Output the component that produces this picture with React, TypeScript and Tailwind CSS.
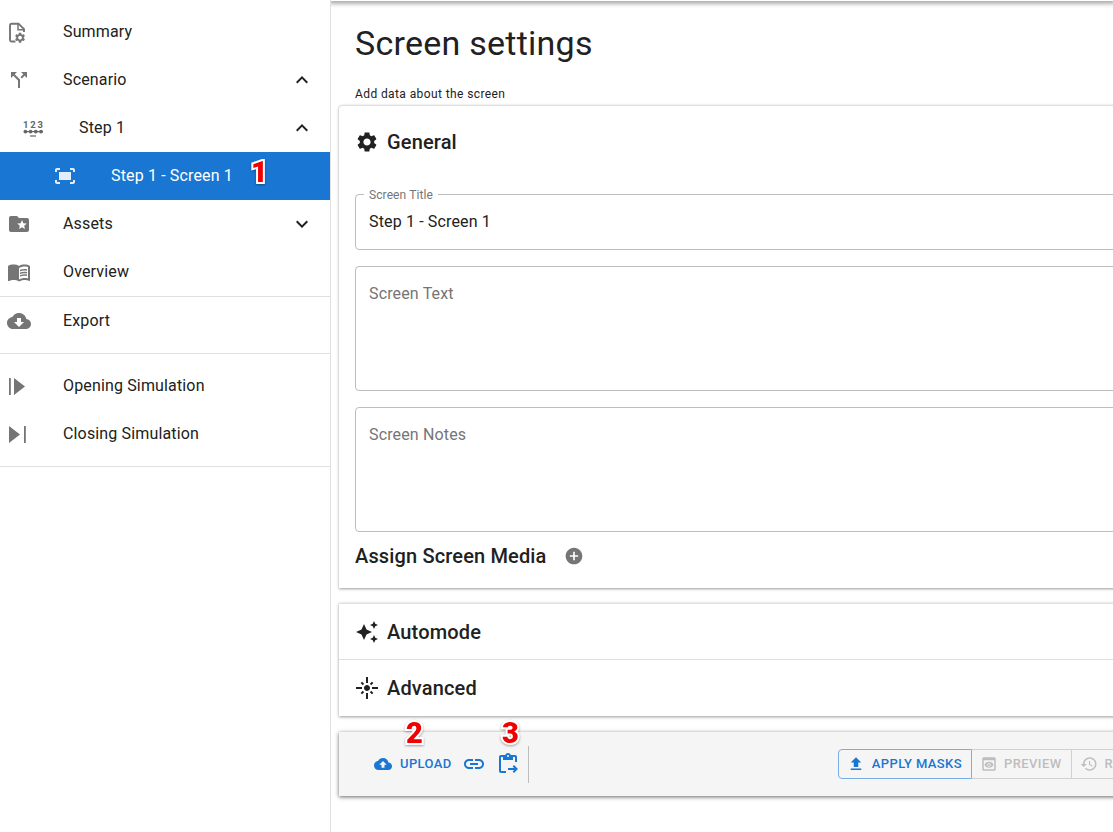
import type { ReactNode } from 'react';

function Icon({ d, size = 24, className = '' }: { d: string; size?: number; className?: string }) {
  return (
    <svg viewBox="0 0 24 24" width={size} height={size} fill="currentColor" className={`shrink-0 ${className}`}>
      <path d={d} />
    </svg>
  );
}

const paths = {
  gear: 'M19.14 12.94c.04-.3.06-.61.06-.94 0-.32-.02-.64-.07-.94l2.03-1.58c.18-.14.23-.41.12-.61l-1.92-3.32c-.12-.22-.37-.29-.59-.22l-2.39.96c-.5-.38-1.03-.7-1.62-.94l-.36-2.54c-.04-.24-.24-.41-.48-.41h-3.84c-.24 0-.43.17-.47.41l-.36 2.54c-.59.24-1.13.57-1.62.94l-2.39-.96c-.22-.08-.47 0-.59.22L2.74 8.87c-.12.21-.08.47.12.61l2.03 1.58c-.05.3-.09.63-.09.94s.02.64.07.94l-2.03 1.58c-.18.14-.23.41-.12.61l1.92 3.32c.12.22.37.29.59.22l2.39-.96c.5.38 1.03.7 1.62.94l.36 2.54c.05.24.24.41.48.41h3.84c.24 0 .44-.17.47-.41l.36-2.54c.59-.24 1.13-.56 1.62-.94l2.39.96c.22.08.47 0 .59-.22l1.92-3.32c.12-.22.07-.47-.12-.61l-2.01-1.58zM12 15.6c-1.98 0-3.6-1.62-3.6-3.6s1.62-3.6 3.6-3.6 3.6 1.62 3.6 3.6-1.62 3.6-3.6 3.6z',
  less: 'M12 8l-6 6 1.41 1.41L12 10.83l4.59 4.58L18 14z',
  more: 'M16.59 8.59 12 13.17 7.41 8.59 6 10l6 6 6-6z',
  split: 'M14 4l2.29 2.29-2.88 2.88 1.42 1.42 2.88-2.88L20 10V4zm-4 0H4v6l2.29-2.29 4.71 4.7V20h2v-8.41l-5.29-5.3z',
  fit: 'M17 4h3c1.1 0 2 .9 2 2v2h-2V6h-3V4zM4 8V6h3V4H4c-1.1 0-2 .9-2 2v2h2zm16 8v2h-3v2h3c1.1 0 2-.9 2-2v-2h-2zM7 18H4v-2H2v2c0 1.1.9 2 2 2h3v-2zM18 8H6v8h12V8z',
  folder: 'M20 6h-8l-2-2H4c-1.1 0-2 .9-2 2v12c0 1.1.9 2 2 2h16c1.1 0 2-.9 2-2V8c0-1.1-.9-2-2-2zm-2.06 11L15 15.28 12.06 17l.78-3.33-2.59-2.24 3.41-.29L15 8l1.34 3.14 3.41.29-2.59 2.24.78 3.33z',
  book: 'M21 5c-1.11-.35-2.33-.5-3.5-.5-1.95 0-4.05.4-5.5 1.5-1.45-1.1-3.55-1.5-5.5-1.5S2.45 4.9 1 6v14.65c0 .25.25.5.5.5.1 0 .15-.05.25-.05C3.1 20.45 5.05 20 6.5 20c1.95 0 4.05.4 5.5 1.5 1.35-.85 3.8-1.5 5.5-1.5 1.65 0 3.35.3 4.75 1.05.1.05.15.05.25.05.25 0 .5-.25.5-.5V6c-.6-.45-1.25-.75-2-1zm0 13.5c-1.1-.35-2.3-.5-3.5-.5-1.7 0-4.15.65-5.5 1.5V8c1.35-.85 3.8-1.5 5.5-1.5 1.2 0 2.4.15 3.5.5v11.5zM17.5 10.5c.88 0 1.73.09 2.5.26V9.24c-.79-.15-1.64-.24-2.5-.24-1.7 0-3.24.29-4.5.83v1.66c1.13-.64 2.7-.99 4.5-.99zM13 12.49v1.66c1.13-.64 2.7-.99 4.5-.99.88 0 1.73.09 2.5.26V11.9c-.79-.15-1.64-.24-2.5-.24-1.7 0-3.24.3-4.5.83zM17.5 14.33c-1.7 0-3.24.29-4.5.83v1.66c1.13-.64 2.7-.99 4.5-.99.88 0 1.73.09 2.5.26v-1.52c-.79-.16-1.64-.24-2.5-.24z',
  cloudDown: 'M19.35 10.04C18.67 6.59 15.64 4 12 4 9.11 4 6.6 5.64 5.35 8.04 2.34 8.36 0 10.91 0 14c0 3.31 2.69 6 6 6h13c2.76 0 5-2.24 5-5 0-2.64-2.05-4.78-4.65-4.96zM17 13l-5 5-5-5h3V9h4v4h3z',
  cloudUp: 'M19.35 10.04C18.67 6.59 15.64 4 12 4 9.11 4 6.6 5.64 5.35 8.04 2.34 8.36 0 10.91 0 14c0 3.31 2.69 6 6 6h13c2.76 0 5-2.24 5-5 0-2.64-2.05-4.78-4.65-4.96zM14 13v4h-4v-4H7l5-5 5 5h-3z',
  opening: 'M2 4h1.8v17H2zM7 4l11 8.5L7 21z',
  closing: 'M2 4l11 8.5L2 21zM17 4h1.8v17H17z',
  add: 'M12 2C6.48 2 2 6.48 2 12s4.48 10 10 10 10-4.48 10-10S17.52 2 12 2zm5 11h-4v4h-2v-4H7v-2h4V7h2v4h4v2z',
  auto: 'm19 9 1.25-2.75L23 5l-2.75-1.25L19 1l-1.25 2.75L15 5l2.75 1.25zm-7.5.5L9 4 6.5 9.5 1 12l5.5 2.5L9 20l2.5-5.5L17 12zM19 15l-1.25 2.75L15 19l2.75 1.25L19 23l1.25-2.75L23 19l-2.75-1.25z',
  flare: 'M7 11H1v2h6v-2zm2.17-3.24L7.05 5.64 5.64 7.05l2.12 2.12 1.41-1.41zM13 1h-2v6h2V1zm5.36 6.05-1.41-1.41-2.12 2.12 1.41 1.41 2.12-2.12zM17 11v2h6v-2h-6zm-5-2c-1.66 0-3 1.34-3 3s1.34 3 3 3 3-1.34 3-3-1.34-3-3-3zm2.83 7.24 2.12 2.12 1.41-1.41-2.12-2.12-1.41 1.41zm-9.19.71 1.41 1.41 2.12-2.12-1.41-1.41-2.12 2.12zM11 23h2v-6h-2v6z',
  link: 'M3.9 12c0-1.71 1.39-3.1 3.1-3.1h4V7H7c-2.76 0-5 2.24-5 5s2.24 5 5 5h4v-1.9H7c-1.71 0-3.1-1.39-3.1-3.1zM8 13h8v-2H8v2zm9-6h-4v1.9h4c1.71 0 3.1 1.39 3.1 3.1s-1.39 3.1-3.1 3.1h-4V17h4c2.76 0 5-2.24 5-5s-2.24-5-5-5z',
  paste: 'M5 5h2v3h10V5h2v5h2V5c0-1.1-.9-2-2-2h-4.18C14.4 1.84 13.3 1 12 1s-2.4.84-2.82 2H5c-1.1 0-2 .9-2 2v14c0 1.1.9 2 2 2h5v-2H5V5zm7-2c.55 0 1 .45 1 1s-.45 1-1 1-1-.45-1-1 .45-1 1-1zM18.01 13l-1.42 1.41 1.58 1.58H12v2h6.17l-1.58 1.59 1.42 1.41 3.99-4z',
  publish: 'M5 20h14v-2H5v2zm0-10h4v6h6v-6h4l-7-7-7 7z',
  preview: 'M19 3H5c-1.11 0-2 .9-2 2v14c0 1.1.89 2 2 2h14c1.1 0 2-.9 2-2V5c0-1.1-.89-2-2-2zm0 16H5V7h14v12zm-5.5-6c0 .83-.67 1.5-1.5 1.5s-1.5-.67-1.5-1.5.67-1.5 1.5-1.5 1.5.67 1.5 1.5zM12 9c-2.73 0-5.06 1.66-6 4 .94 2.34 3.27 4 6 4s5.06-1.66 6-4c-.94-2.34-3.27-4-6-4zm0 6.5c-1.38 0-2.5-1.12-2.5-2.5s1.12-2.5 2.5-2.5 2.5 1.12 2.5 2.5-1.12 2.5-2.5 2.5z',
  history: 'M13 3c-4.97 0-9 4.03-9 9H1l3.89 3.89.07.14L9 12H6c0-3.87 3.13-7 7-7s7 3.13 7 7-3.13 7-7 7c-1.93 0-3.68-.79-4.94-2.06l-1.42 1.42C8.27 19.99 10.51 21 13 21c4.97 0 9-4.03 9-9s-4.03-9-9-9zm-1 5v5l4.28 2.54.72-1.21-3.5-2.08V8H12z',
};

function FileGearIcon() {
  return (
    <svg viewBox="0 0 24 24" width={24} height={24} fill="none" className="shrink-0">
      <path d="M8.5 21.5H4.5A1.5 1.5 0 0 1 3 20V5.2A1.5 1.5 0 0 1 4.5 3.7H11.5L17 9.2V12" stroke="currentColor" strokeWidth="1.9" />
      <path d="M11 4V9.8H16.6" stroke="currentColor" strokeWidth="1.5" />
      <g transform="translate(6.8 11.4) scale(.52)">
        <path d={paths.gear} fill="currentColor" />
      </g>
    </svg>
  );
}

function StepsIcon() {
  return (
    <svg viewBox="0 0 24 24" width={24} height={24} className="shrink-0" fill="currentColor">
      <text x="12" y="11.5" textAnchor="middle" fontSize="9.5" fontWeight="700" fontFamily="Roboto, sans-serif" letterSpacing="1.8">123</text>
      <rect x="2" y="15" width="19" height="1.2" />
      <circle cx="3.4" cy="15.6" r="1.9" />
      <circle cx="8.6" cy="15.6" r="1.9" />
      <circle cx="13.8" cy="15.6" r="1.9" />
      <circle cx="19" cy="15.6" r="1.9" />
      <rect x="8" y="19.4" width="6" height="1.2" />
    </svg>
  );
}

function Marker({ value, className }: { value: string; className: string }) {
  return (
    <span
      className={`absolute font-['Roboto',sans-serif] text-[29px] leading-none font-black text-[#f00000] [-webkit-text-stroke:4px_white] [paint-order:stroke_fill] drop-shadow-[0_1px_1px_rgba(0,0,0,0.35)] ${className}`}
    >
      {value}
    </span>
  );
}

function NavRow({ icon, label, chevron }: { icon: ReactNode; label: string; chevron?: 'up' | 'down' }) {
  return (
    <div className="relative flex h-12 items-center">
      <span className="absolute left-[7px] flex text-[#757575]">{icon}</span>
      <span className="ml-[63px] text-base tracking-[0.15px]">{label}</span>
      {chevron && <Icon d={chevron === 'up' ? paths.less : paths.more} className="absolute right-[16px] text-[#212121]" />}
    </div>
  );
}

function Field({ label, placeholder, value, tall }: { label?: string; placeholder?: string; value?: string; tall?: boolean }) {
  return (
    <div className={`relative rounded border border-[#bdbdbd] px-[13px] ${tall ? 'h-[125px] pt-[15px]' : 'flex h-[56px] items-center'}`}>
      {label && <span className="absolute -top-2 left-[8px] bg-white px-[5px] text-xs leading-4 tracking-[0.1px] text-[#757575]">{label}</span>}
      {value && <span className="text-base tracking-[0.15px] text-[#212121]">{value}</span>}
      {placeholder && <span className="text-base tracking-[0.15px] text-[#757575]">{placeholder}</span>}
    </div>
  );
}

function SectionHead({ icon, title }: { icon: string; title: string }) {
  return (
    <div className="flex h-full items-center pl-[16px]">
      <Icon d={icon} className="text-[#212121]" />
      <span className="ml-2 text-xl font-medium tracking-[0.15px] text-[#212121]">{title}</span>
    </div>
  );
}

export default function App() {
  return (
    <div className="flex h-[832px] w-[1113px] overflow-hidden bg-white font-['Roboto',sans-serif] text-[#212121]">
      <aside className="w-[331px] shrink-0 border-r border-[#e0e0e0] pt-[8px]">
        <NavRow icon={<FileGearIcon />} label="Summary" />
        <NavRow icon={<Icon d={paths.split} />} label="Scenario" chevron="up" />
        <div className="relative flex h-12 items-center">
          <span className="absolute left-[22px] flex text-[#666666]"><StepsIcon /></span>
          <span className="ml-[79px] text-base tracking-[0.15px]">Step 1</span>
          <Icon d={paths.less} className="absolute right-[16px] text-[#212121]" />
        </div>
        <div className="relative flex h-12 items-center bg-[#1976d2] text-white">
          <span className="absolute left-[53px] flex text-[#e3eefa]"><Icon d={paths.fit} /></span>
          <span className="ml-[111px] text-base tracking-[0.15px]">Step 1 - Screen 1</span>
          <Marker value="1" className="left-[251px] top-[6px]" />
        </div>
        <NavRow icon={<Icon d={paths.folder} />} label="Assets" chevron="down" />
        <div className="border-b border-[#e0e0e0]">
          <NavRow icon={<Icon d={paths.book} />} label="Overview" />
        </div>
        <div className="h-[57px] border-b border-[#e0e0e0]">
          <NavRow icon={<Icon d={paths.cloudDown} />} label="Export" />
        </div>
        <div className="border-b border-[#e0e0e0] py-2">
          <NavRow icon={<Icon d={paths.opening} />} label="Opening Simulation" />
          <NavRow icon={<Icon d={paths.closing} />} label="Closing Simulation" />
        </div>
      </aside>

      <main className="relative min-w-0 flex-1 overflow-hidden">
        <div className="pointer-events-none absolute inset-x-0 top-0 h-px shadow-[0_0_5px_2px_rgba(0,0,0,0.45)]" />
        <div className="w-[1000px] pl-[8px]">
          <div className="pl-[16px]">
            <h1 className="pt-[23px] text-[34px] leading-10 tracking-[0.25px] text-[#212121]">Screen settings</h1>
            <p className="mt-[23px] text-xs leading-4 tracking-[0.4px] text-[#212121]">Add data about the screen</p>
          </div>

          <section className="mt-[3px] h-[483px] rounded-t border-t border-[#e0e0e0] bg-white shadow-[0_1px_3px_rgba(0,0,0,0.4)]">
            <div className="flex h-[72px] items-center pl-[16px]">
              <Icon d={paths.gear} className="text-[#212121]" />
              <span className="ml-2 text-xl font-medium tracking-[0.15px]">General</span>
            </div>
            <div className="flex flex-col gap-4 pl-[16px] pt-[16px]">
              <Field label="Screen Title" value="Step 1 - Screen 1" />
              <Field placeholder="Screen Text" tall />
              <Field placeholder="Screen Notes" tall />
            </div>
            <div className="mt-[10px] flex h-7 items-center pl-[16px]">
              <span className="text-xl font-medium tracking-[0.15px]">Assign Screen Media</span>
              <Icon d={paths.add} size={20} className="ml-[17px] text-[#757575]" />
            </div>
          </section>

          <section className="mt-[15px] bg-white shadow-[0_1px_3px_rgba(0,0,0,0.4)]">
            <div className="h-14 border-t border-[#e0e0e0]"><SectionHead icon={paths.auto} title="Automode" /></div>
            <div className="h-[57px] border-t border-[#e0e0e0]"><SectionHead icon={paths.flare} title="Advanced" /></div>
          </section>

          <div className="relative mt-[16px] flex h-16 items-center bg-[#f5f5f5] pl-[35px] shadow-[0_1px_4px_rgba(0,0,0,0.6)]">
            <Icon d={paths.cloudUp} size={18} className="text-[#1976d2]" />
            <span className="ml-[8px] text-[13px] font-medium tracking-[0.4px] text-[#1976d2]">UPLOAD</span>
            <Icon d={paths.link} className="ml-[10px] text-[#1976d2]" />
            <Icon d={paths.paste} className="ml-[10px] text-[#1976d2]" />
            <span className="ml-[8px] h-[37px] w-px bg-[#bdbdbd]" />
            <Marker value="2" className="left-[67px] -top-[13px]" />
            <Marker value="3" className="left-[163px] -top-[13px]" />
            <div className="ml-[309px] flex h-[30px]">
              <div className="flex items-center rounded-l border border-[#78aee4] pl-[8px] pr-[9px] text-[#1976d2]">
                <Icon d={paths.publish} size={18} />
                <span className="ml-[7px] text-[13px] font-medium tracking-[0.4px]">APPLY MASKS</span>
              </div>
              <div className="flex items-center border-y border-r border-[#d0d0d0] pl-[8px] pr-[9px] text-[#bdbdbd]">
                <Icon d={paths.preview} size={18} />
                <span className="ml-[6px] text-[13px] font-medium tracking-[0.4px]">PREVIEW</span>
              </div>
              <div className="flex items-center border-y border-r border-[#d0d0d0] pl-[8px] pr-[9px] text-[#bdbdbd]">
                <Icon d={paths.history} size={18} />
                <span className="ml-[7px] text-[13px] font-medium tracking-[0.4px]">RESET</span>
              </div>
            </div>
          </div>
        </div>
      </main>
    </div>
  );
}
